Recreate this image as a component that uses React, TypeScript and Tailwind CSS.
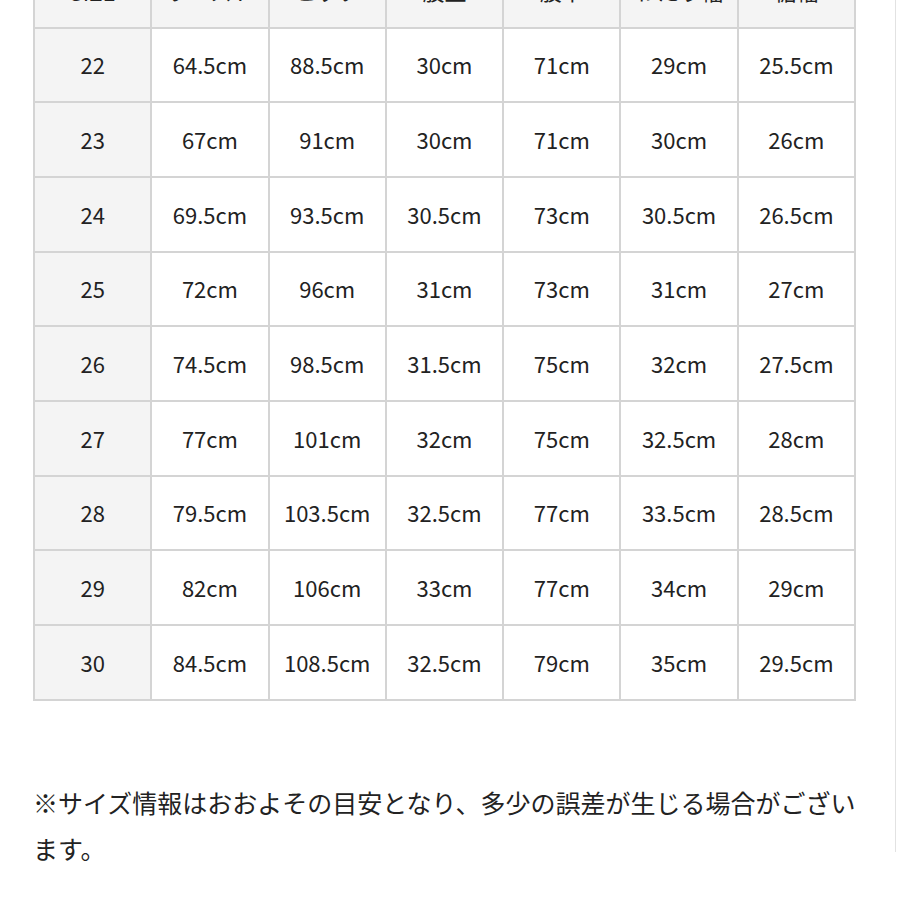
import React from "react";

const headers = ["SIZE", "ウエスト", "ヒップ", "股上", "股下", "わたり幅", "裾幅"];
const rows: string[][] = [
  ["22", "64.5cm", "88.5cm", "30cm", "71cm", "29cm", "25.5cm"],
  ["23", "67cm", "91cm", "30cm", "71cm", "30cm", "26cm"],
  ["24", "69.5cm", "93.5cm", "30.5cm", "73cm", "30.5cm", "26.5cm"],
  ["25", "72cm", "96cm", "31cm", "73cm", "31cm", "27cm"],
  ["26", "74.5cm", "98.5cm", "31.5cm", "75cm", "32cm", "27.5cm"],
  ["27", "77cm", "101cm", "32cm", "75cm", "32.5cm", "28cm"],
  ["28", "79.5cm", "103.5cm", "32.5cm", "77cm", "33.5cm", "28.5cm"],
  ["29", "82cm", "106cm", "33cm", "77cm", "34cm", "29cm"],
  ["30", "84.5cm", "108.5cm", "32.5cm", "79cm", "35cm", "29.5cm"],
];

export default function App() {
  return (
    <div
      className="w-[900px] h-[900px] overflow-hidden bg-white text-[#222]"
      style={{ fontFamily: '"Noto Sans CJK JP", "Noto Sans", sans-serif' }}
    >
      <div className="w-[896px] h-[900px] border-r border-[#e2e2e2] pl-[33px]">
        <div className="w-[823px] -mt-[48px] grid grid-cols-7 gap-[2px] p-[2px] bg-[#d4d4d4] auto-rows-[72.67px]">
          {headers.map((h, i) => (
            <div
              key={h}
              className={
                "bg-[#f4f4f4] flex items-center justify-center text-[22px]" +
                (i === 0 ? " pt-[2px]" : "")
              }
            >
              {h}
            </div>
          ))}
          {rows.map((r) =>
            r.map((c, i) => (
              <div
                key={r[0] + "-" + i}
                className={
                  (i === 0 ? "bg-[#f4f4f4]" : "bg-white") +
                  " flex items-center justify-center text-[22px]"
                }
              >
                {c}
              </div>
            ))
          )}
        </div>
        <p className="mt-[78px] w-[840px] text-[25px] leading-[46px] text-[#222]">
          ※サイズ情報はおおよその目安となり、多少の誤差が生じる場合がございます。
        </p>
      </div>
    </div>
  );
}
